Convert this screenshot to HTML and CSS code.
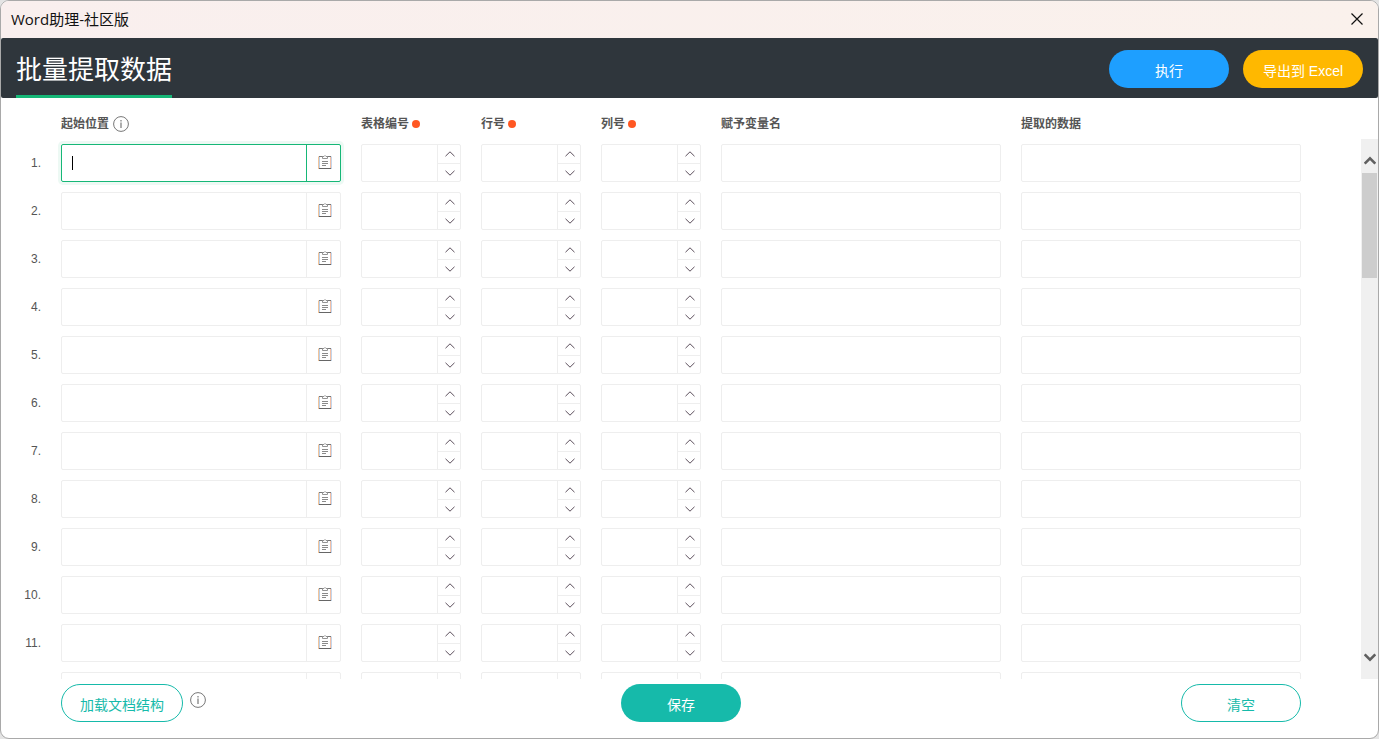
FILE: index.html
```html
<!DOCTYPE html>
<html lang="zh-CN">
<head>
<meta charset="utf-8">
<title>Word助理-社区版</title>
<link rel="stylesheet" href="styles.css">
</head>
<body>
<svg class="sprite" aria-hidden="true">
  <symbol id="icon-info" viewBox="0 0 16 16">
    <circle cx="8" cy="8" r="7.4" fill="none" stroke="currentColor"/>
    <path d="M8 6.6V12M8 4V5.4" fill="none" stroke="currentColor" stroke-width="1.2"/>
  </symbol>
  <symbol id="icon-clipboard" viewBox="0 0 14 15">
    <path d="M.5 1.5V14" stroke="#f2c49a" fill="none"/>
    <path d="M1.5 2V13" stroke="#b9cfe8" fill="none"/>
    <path d="M12.5 2V13" stroke="#f3bfa6" fill="none"/>
    <path d="M13.5 1.5V14" stroke="#c3d5ea" fill="none"/>
    <path d="M1 1.5H4.5M9.5 1.5H13" stroke="#777" fill="none"/>
    <path d="M1 13.5H13" stroke="#666" fill="none"/>
    <path d="M4.5 1V3.5H9.5V1M5 1.5H6L7 .5 8 1.5H9" stroke="#888" fill="none" stroke-width=".9"/>
    <path d="M4 6.5H10M4 8.5H10M4 10.5H8" stroke="#8a8a8a" fill="none"/>
  </symbol>
  <symbol id="icon-up" viewBox="0 0 10 6"><path d="M.5 5.2 5 .8 9.5 5.2" fill="none" stroke="currentColor"/></symbol>
  <symbol id="icon-down" viewBox="0 0 10 6"><path d="M.5 .8 5 5.2 9.5 .8" fill="none" stroke="currentColor"/></symbol>
</svg>

<div class="window">
  <div class="titlebar">
    <span class="titlebar-text">Word助理-社区版</span>
    <button class="close" type="button" aria-label="关闭">
      <svg width="12" height="12" viewBox="0 0 12 12"><path d="M.5 .5 11.5 11.5M11.5 .5 .5 11.5" stroke="#111" stroke-width="1.2" fill="none"/></svg>
    </button>
  </div>

  <header class="header">
    <h1 class="heading">批量提取数据</h1>
    <div class="actions">
      <button class="btn btn-run" type="button">执行</button>
      <button class="btn btn-export" type="button">导出到 Excel</button>
    </div>
  </header>

  <div class="grid-row column-heads">
    <span></span>
    <div class="head head-start"><span id="h-start">起始位置</span><svg class="info" width="16" height="16"><use href="#icon-info"/></svg></div>
    <div class="head"><span id="h-table">表格编号</span><i class="dot"></i></div>
    <div class="head"><span id="h-line">行号</span><i class="dot"></i></div>
    <div class="head"><span id="h-col">列号</span><i class="dot"></i></div>
    <div class="head"><span id="h-var">赋予变量名</span></div>
    <div class="head"><span id="h-data">提取的数据</span></div>
  </div>

  <main class="body">
    <form class="rows" id="rows"></form>
    <div class="scrollbar" aria-hidden="true">
      <svg class="scroll-arrow" width="12" height="9" viewBox="0 0 12 9"><path d="M.7 7.6 6 2.3 11.3 7.6" fill="none" stroke="#606060" stroke-width="2.6"/></svg>
      <div class="scroll-track"><div class="scroll-thumb"></div></div>
      <svg class="scroll-arrow scroll-arrow-down" width="12" height="9" viewBox="0 0 12 9"><path d="M.7 1.4 6 6.7 11.3 1.4" fill="none" stroke="#606060" stroke-width="2.6"/></svg>
    </div>
  </main>

  <footer class="footer">
    <div class="footer-left">
      <button class="btn btn-outline" type="button">加载文档结构</button>
      <svg class="info" width="16" height="16"><use href="#icon-info"/></svg>
    </div>
    <button class="btn btn-save" type="button">保存</button>
    <div class="footer-right"><button class="btn btn-outline" type="button">清空</button></div>
  </footer>
</div>
<script src="app.js"></script>
</body>
</html>
```

FILE: styles.css
```css
* { box-sizing: border-box; }

body {
  margin: 0;
  background: #e4e4e4;
  font-family: "Liberation Sans", "Noto Sans CJK SC", sans-serif;
  font-size: 12px;
  color: #555;
}

button, input {
  font: inherit;
  color: inherit;
  margin: 0;
  padding: 0;
  border: 0;
  background: none;
}

.sprite { display: none; }

.window {
  display: flex;
  flex-direction: column;
  height: 100vh;
  overflow: hidden;
  border: 1px solid #a9a9a9;
  border-radius: 9px;
  background: #fff;
}

.titlebar {
  display: flex;
  flex: none;
  align-items: center;
  justify-content: space-between;
  height: 37px;
  padding: 0 15px 2px 10px;
  background: linear-gradient(90deg, #f9efee, #faf1ec);
}

.titlebar-text {
  font-family: "Open Sans", "Noto Sans CJK SC", sans-serif;
  font-size: 15px;
  line-height: 20px;
  color: #111;
}

.close { display: flex; }

.header {
  display: flex;
  flex: none;
  justify-content: space-between;
  height: 60px;
  padding: 0 15px;
  border-radius: 2px;
  background: #2f363c;
}

.heading {
  margin: 0;
  padding-top: 7px;
  border-bottom: 3px solid #16b777;
  font-size: 26px;
  font-weight: 400;
  line-height: 50px;
  color: #fff;
}

.actions {
  display: flex;
  align-items: center;
  gap: 14px;
  padding-top: 2px;
}

.btn {
  min-width: 120px;
  height: 38px;
  padding: 4px 18px 0;
  border-radius: 19px;
  font-size: 14px;
  line-height: 20px;
  white-space: nowrap;
  color: #fff;
}

.btn-run { background: #1e9fff; }
.btn-export { background: #ffb800; }
.btn-save { background: #16baaa; }

.btn-outline {
  border: 1px solid #16baaa;
  color: #16baaa;
}

.grid-row {
  display: grid;
  grid-template-columns: 40px minmax(160px, 1fr) repeat(3, 100px) repeat(2, minmax(160px, 1fr));
  column-gap: 20px;
}

.column-heads {
  flex: none;
  height: 41px;
  padding: 11px 77px 0 0;
}

.head {
  display: flex;
  align-items: center;
  height: 30px;
  gap: 3px;
  font-weight: 700;
  line-height: 16px;
}

.head-start { gap: 4px; }

.info {
  flex: none;
  color: #777;
}

.dot {
  width: 8px;
  height: 8px;
  border-radius: 50%;
  background: #ff5722;
}

.body {
  display: flex;
  flex: 1;
  min-height: 0;
}

.rows {
  display: flex;
  flex: 1;
  flex-direction: column;
  gap: 10px;
  padding: 5px 60px 0 0;
  overflow-y: auto;
  scrollbar-width: none;
}

.row-number {
  text-align: right;
  line-height: 38px;
}

.field {
  display: flex;
  position: relative;
  height: 38px;
  min-width: 0;
  border: 1px solid #eee;
  border-radius: 2px;
}

.field input {
  flex: 1;
  width: 100%;
  min-width: 0;
  padding: 0 10px;
  font-size: 14px;
  outline: none;
  appearance: textfield;
}

.field input::-webkit-inner-spin-button { display: none; }

.pick {
  display: flex;
  flex: none;
  align-items: center;
  justify-content: center;
  width: 34px;
  padding: 0 0 2px 2px;
  border-left: 1px solid #eee;
}

.spin {
  display: grid;
  flex: none;
  grid-template-rows: 1fr 1fr;
  width: 23px;
  border-left: 1px solid #eee;
}

.spin button {
  display: flex;
  align-items: center;
  justify-content: center;
  padding-left: 2px;
  color: #5c4f5c;
}

.spin button + button { border-top: 1px solid #eee; }

.field.is-active {
  border-color: #16b777;
  box-shadow: 0 0 0 3px rgba(22, 183, 119, 0.08);
}

.field.is-active .pick { border-color: #16b777; }

.caret {
  position: absolute;
  top: 11px;
  left: 10px;
  width: 1px;
  height: 14px;
  background: #000;
}

.scrollbar {
  display: flex;
  flex: none;
  flex-direction: column;
  align-items: center;
  width: 17px;
  padding: 17px 1px 0;
  background: #f0f0f0;
}

.scroll-arrow { flex: none; }

.scroll-track {
  flex: 1;
  width: 100%;
  padding-top: 8px;
}

.scroll-thumb {
  height: 105px;
  background: #cdcdcd;
}

.scroll-arrow-down { margin-bottom: 17px; }

.footer {
  display: grid;
  flex: none;
  grid-template-columns: 1fr auto 1fr;
  height: 59px;
  padding: 5px 77px 0 60px;
}

.footer-left {
  display: flex;
  height: 38px;
  gap: 7px;
}

.footer-left .info { margin-top: 8px; }

.footer-right {
  display: flex;
  justify-content: flex-end;
}
```

FILE: app.js
```js
const NUMBERED_ROWS = 11;

const icon = (name, w, h) => `<svg width="${w}" height="${h}"><use href="#icon-${name}"/></svg>`;

const numberField = (labelId) => `
  <div class="field">
    <input type="number" aria-labelledby="${labelId}">
    <div class="spin">
      <button type="button" aria-label="增加">${icon("up", 10, 6)}</button>
      <button type="button" aria-label="减少">${icon("down", 10, 6)}</button>
    </div>
  </div>`;

const textField = (labelId) => `
  <div class="field"><input type="text" aria-labelledby="${labelId}"></div>`;

const row = (label, active) => `
  <div class="grid-row">
    <span class="row-number">${label}</span>
    <div class="field${active ? " is-active" : ""}">
      <input type="text" aria-labelledby="h-start">
      ${active ? '<span class="caret"></span>' : ""}
      <button class="pick" type="button" aria-label="粘贴">${icon("clipboard", 14, 15)}</button>
    </div>
    ${numberField("h-table")}
    ${numberField("h-line")}
    ${numberField("h-col")}
    ${textField("h-var")}
    ${textField("h-data")}
  </div>`;

// The numbered rows are followed by one spare row without a number.
const labels = Array.from({ length: NUMBERED_ROWS }, (_, i) => `${i + 1}.`);
document.getElementById("rows").innerHTML =
  [...labels, ""].map((label, i) => row(label, i === 0)).join("");
```
